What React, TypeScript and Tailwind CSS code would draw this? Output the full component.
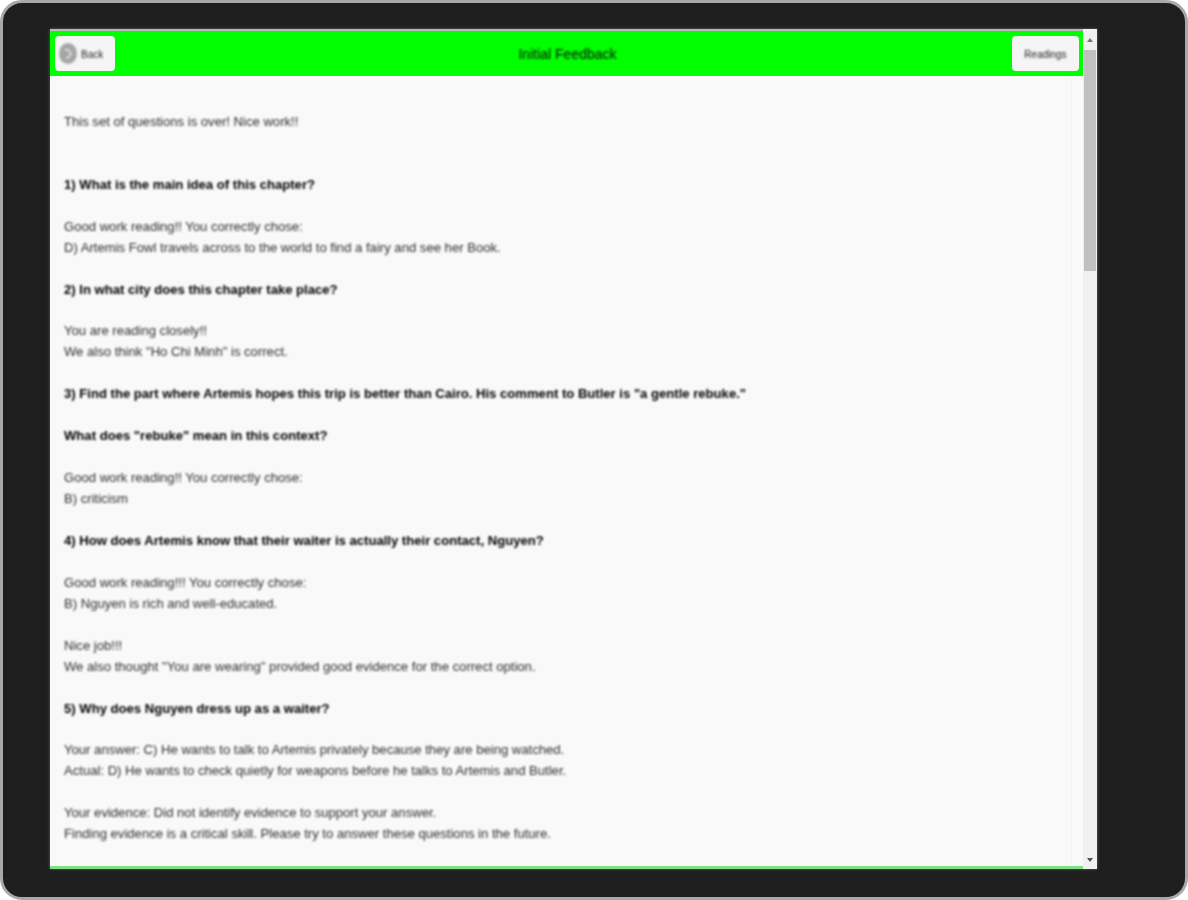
import React from 'react';

// one entry per block, null = blank line
const lines: ({ t: string; b?: boolean } | null)[] = [
  { t: 'This set of questions is over! Nice work!!' },
  null,
  null,
  { t: '1) What is the main idea of this chapter?', b: true },
  null,
  { t: 'Good work reading!! You correctly chose:' },
  { t: 'D) Artemis Fowl travels across to the world to find a fairy and see her Book.' },
  null,
  { t: '2) In what city does this chapter take place?', b: true },
  null,
  { t: 'You are reading closely!!' },
  { t: 'We also think "Ho Chi Minh" is correct.' },
  null,
  { t: '3) Find the part where Artemis hopes this trip is better than Cairo. His comment to Butler is "a gentle rebuke."', b: true },
  null,
  { t: 'What does "rebuke" mean in this context?', b: true },
  null,
  { t: 'Good work reading!! You correctly chose:' },
  { t: 'B) criticism' },
  null,
  { t: '4) How does Artemis know that their waiter is actually their contact, Nguyen?', b: true },
  null,
  { t: 'Good work reading!!! You correctly chose:' },
  { t: 'B) Nguyen is rich and well-educated.' },
  null,
  { t: 'Nice job!!!' },
  { t: 'We also thought "You are wearing" provided good evidence for the correct option.' },
  null,
  { t: '5) Why does Nguyen dress up as a waiter?', b: true },
  null,
  { t: 'Your answer: C) He wants to talk to Artemis privately because they are being watched.' },
  { t: 'Actual: D) He wants to check quietly for weapons before he talks to Artemis and Butler.' },
  null,
  { t: 'Your evidence: Did not identify evidence to support your answer.' },
  { t: 'Finding evidence is a critical skill. Please try to answer these questions in the future.' },
];

export default function App() {
  return (
    <div className="w-[1188px] h-[900px] overflow-hidden bg-[#1e1e1e] border-[3px] border-[#a8a8a8] rounded-[22px] pt-[26px] pl-[47px] pr-[88px] font-['Liberation_Sans',sans-serif]">
      <div className="flex h-[840px] w-[1047px] bg-[#f9f9f9] shadow-[0_0_3px_#666]">
        <div className="flex flex-col flex-1 min-w-0 border-b-[3px] border-[#7fe083]">
          {/* header */}
          <div className="flex items-center justify-between h-[47px] border-t-[2px] border-[#b8b8b8] pl-[5px] pr-[4px] bg-[#00ff00] shrink-0">
            <button className="flex items-center gap-[4px] w-[60px] h-[35px] pl-[4px] bg-[#f5f5f5] rounded-[4px] text-[10px] text-[#222]">
              <svg width="18" height="21" viewBox="0 0 20 20" preserveAspectRatio="none" className="blur-[0.8px]">
                <circle cx="10" cy="10" r="10" fill="#a6a6a6" />
                <path d="M6.5 6.5h3.5l3.5 3.5-3.5 4H8" fill="none" stroke="#e6e6e6" strokeWidth="1.5" />
              </svg>
              <span className="blur-[0.8px] mt-[1px]">Back</span>
            </button>
            <div className="text-[14px] text-[#111] ml-[8px] mt-[1px] blur-[0.8px]">Initial Feedback</div>
            <button className="w-[67px] h-[35px] bg-[#f5f5f5] rounded-[4px] text-[10px] text-[#222]">
              <span className="blur-[0.8px] block mt-[1px]">Readings</span>
            </button>
          </div>
          {/* feedback text */}
          <div className="flex-1 overflow-hidden pt-[36px] pl-[14px] mr-[11px] border-r border-[#f4f4f4] text-[13.1px] leading-[20.95px] text-[#2e2e2e]">
            <div className="blur-[0.8px]">
              {lines.map((l, i) =>
                l === null ? (
                  <div key={i} className="h-[20.95px]" />
                ) : (
                  <div key={i} className={l.b ? 'font-bold text-[#000] whitespace-nowrap' : 'whitespace-nowrap'}>
                    {l.t}
                  </div>
                )
              )}
            </div>
          </div>
        </div>
        {/* scrollbar */}
        <div className="flex flex-col w-[14px] shrink-0 bg-[#f0f0f0]">
          <div className="flex items-center justify-center h-[21px] bg-[#f1f1f1]">
            <div className="w-0 h-0 border-x-[3px] border-x-transparent border-b-[4px] border-b-[#777]" />
          </div>
          <div className="h-[221px] bg-[#c0c0c0] mx-px" />
          <div className="flex-1" />
          <div className="flex items-center justify-center h-[19px]">
            <div className="w-0 h-0 border-x-[3px] border-x-transparent border-t-[4px] border-t-[#505050]" />
          </div>
        </div>
      </div>
    </div>
  );
}
